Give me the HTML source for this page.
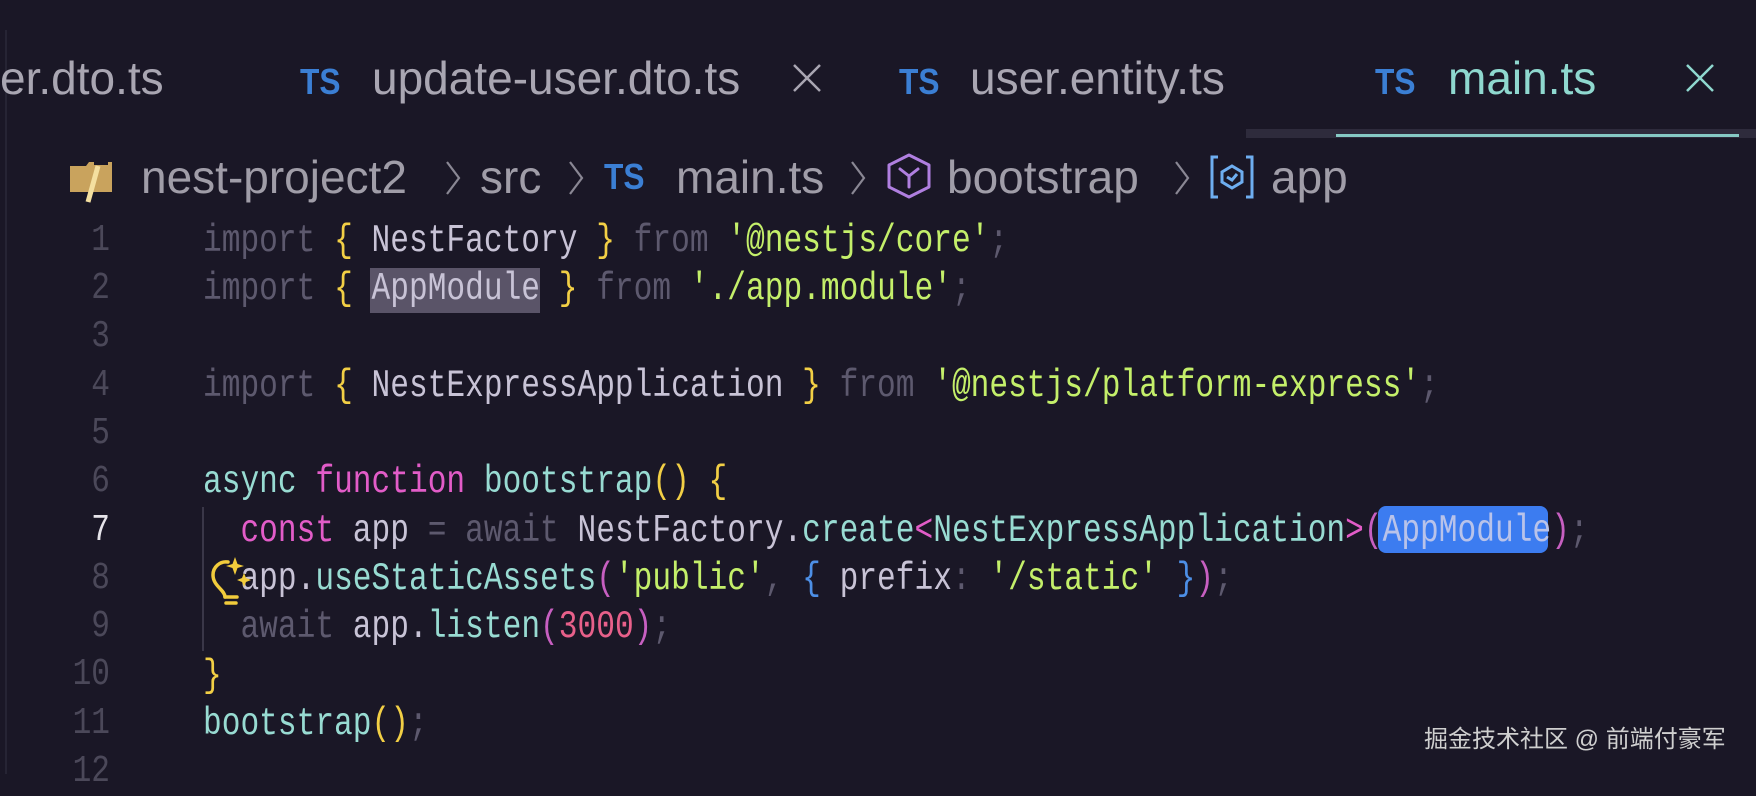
<!DOCTYPE html>
<html><head><meta charset="utf-8">
<style>
html,body{margin:0;padding:0}
body{width:1756px;height:774px;background:#1a1726;position:relative;overflow:hidden;font-family:"Liberation Sans",sans-serif}
.a{position:absolute;white-space:pre}
.tab{font-size:46px;color:#a9a6b2;line-height:60px;top:48px}
.ts{font-weight:bold;color:#3b7fd4;font-size:36px;display:inline-block;transform:scaleX(0.88);transform-origin:left}
.bc{font-size:46px;color:#a09da8;line-height:60px;top:147px}
.ln{font-family:"Liberation Mono",monospace;font-size:38px;color:#4b4859;width:110px;text-align:right;left:0;line-height:48px;transform:scaleX(0.82);transform-origin:right}
.code{position:absolute;left:203px;top:217px;transform:scaleX(0.80);transform-origin:left top;font-family:"Liberation Mono",monospace;font-size:39px;line-height:48.3px;white-space:pre;color:#c8c3d6}
.g{color:#5d596e}.y{color:#f2cf45}.s{color:#c4ef6a}.p{color:#e25cc8}.t{color:#98dbd2}.b{color:#4d8fe6}.r{color:#e8608a}.v{color:#c75fc1}
</style></head><body>
<div class="a" style="left:5px;top:30px;width:2px;height:744px;background:#262434"></div>

<div class="a tab" style="left:0">er.dto.ts</div>
<div class="a tab" style="left:300px"><span class="ts">TS</span></div>
<div class="a tab" style="left:372px">update-user.dto.ts</div>
<svg class="a" style="left:792px;top:63px" width="30" height="30" viewBox="0 0 30 30"><path d="M2 2 L28 28 M28 2 L2 28" stroke="#a9a6b2" stroke-width="2.5"/></svg>
<div class="a tab" style="left:899px"><span class="ts">TS</span></div>
<div class="a tab" style="left:970px">user.entity.ts</div>
<div class="a tab" style="left:1375px"><span class="ts">TS</span></div>
<div class="a tab" style="left:1448px;color:#8fd8cf">main.ts</div>
<svg class="a" style="left:1685px;top:63px" width="30" height="30" viewBox="0 0 30 30"><path d="M2 2 L28 28 M28 2 L2 28" stroke="#8fd8cf" stroke-width="2.5"/></svg>
<div class="a" style="left:1246px;top:129px;width:510px;height:9px;background:#2e2b3c"></div>
<div class="a" style="left:1336px;top:134px;width:403px;height:3px;background:#86c9c4"></div>

<svg class="a" style="left:68px;top:158px" width="46" height="46" viewBox="0 0 46 46">
<path d="M2 8 H18 L21 4 H44 V34 H2 Z" fill="#c9a35d"/>
<rect x="26" y="4" width="14" height="3" fill="#1a1726"/>
<path d="M30 8 L20 44" stroke="#f4dfa0" stroke-width="5"/>
</svg>
<div class="a bc" style="left:141px">nest-project2</div>
<svg class="a" style="left:444px;top:160px" width="18" height="36" viewBox="0 0 18 36"><path d="M3 2 L15 18 L3 34" fill="none" stroke="#8a8794" stroke-width="2.2"/></svg>
<div class="a bc" style="left:480px">src</div>
<svg class="a" style="left:567px;top:160px" width="18" height="36" viewBox="0 0 18 36"><path d="M3 2 L15 18 L3 34" fill="none" stroke="#8a8794" stroke-width="2.2"/></svg>
<div class="a bc" style="left:604px;top:143px"><span class="ts">TS</span></div>
<div class="a bc" style="left:676px">main.ts</div>
<svg class="a" style="left:849px;top:160px" width="18" height="36" viewBox="0 0 18 36"><path d="M3 2 L15 18 L3 34" fill="none" stroke="#8a8794" stroke-width="2.2"/></svg>
<svg class="a" style="left:884px;top:152px" width="50" height="48" viewBox="0 0 50 48">
<path d="M25 3 L45 13 V35 L25 45 L5 35 V13 Z" fill="none" stroke="#b07fe0" stroke-width="3" stroke-linejoin="round"/>
<path d="M16 17 L25 24 L34 17 M25 24 V35" fill="none" stroke="#b07fe0" stroke-width="3" stroke-linecap="round"/>
</svg>
<div class="a bc" style="left:947px">bootstrap</div>
<svg class="a" style="left:1173px;top:160px" width="18" height="36" viewBox="0 0 18 36"><path d="M3 2 L15 18 L3 34" fill="none" stroke="#8a8794" stroke-width="2.2"/></svg>
<svg class="a" style="left:1208px;top:154px" width="48" height="46" viewBox="0 0 48 46">
<path d="M10 3 H4 V43 H10 M38 3 H44 V43 H38" fill="none" stroke="#6eaef0" stroke-width="3"/>
<path d="M24 12 L34 18 V28 L24 34 L14 28 V18 Z" fill="none" stroke="#6eaef0" stroke-width="3"/>
<path d="M19 23 L24 26 L29 20" fill="none" stroke="#6eaef0" stroke-width="3"/>
</svg>
<div class="a bc" style="left:1271px">app</div>

<div class="a ln" style="top:217px">1</div>
<div class="a ln" style="top:265px">2</div>
<div class="a ln" style="top:313px">3</div>
<div class="a ln" style="top:362px">4</div>
<div class="a ln" style="top:410px">5</div>
<div class="a ln" style="top:458px">6</div>
<div class="a ln" style="top:507px;color:#e6e4ea">7</div>
<div class="a ln" style="top:555px">8</div>
<div class="a ln" style="top:603px">9</div>
<div class="a ln" style="top:651px">10</div>
<div class="a ln" style="top:700px">11</div>
<div class="a ln" style="top:748px">12</div>

<div class="a" style="left:202px;top:507px;width:2px;height:144px;background:#3a3748"></div>
<div class="a" style="left:370px;top:268px;width:170px;height:45px;background:#5a5468"></div>
<div class="a" style="left:1378px;top:506px;width:170px;height:47px;background:#3c7cf0;border-radius:8px"></div>

<div class="code"><span class="g">import</span> <span class="y">{</span> NestFactory <span class="y">}</span> <span class="g">from</span> <span class="s">'@nestjs/core'</span><span class="g">;</span>
<span class="g">import</span> <span class="y">{</span> AppModule <span class="y">}</span> <span class="g">from</span> <span class="s">'./app.module'</span><span class="g">;</span>

<span class="g">import</span> <span class="y">{</span> NestExpressApplication <span class="y">}</span> <span class="g">from</span> <span class="s">'@nestjs/platform-express'</span><span class="g">;</span>

<span class="t">async</span> <span class="p">function</span> <span class="t">bootstrap</span><span class="y">()</span> <span class="y">{</span>
  <span class="p">const</span> app <span class="g">=</span> <span class="g">await</span> NestFactory.<span class="t">create</span><span class="p">&lt;</span><span class="t">NestExpressApplication</span><span class="p">&gt;</span><span class="v">(</span><span style="color:#b9c3ea">AppModule</span><span class="v">)</span><span class="g">;</span>
  app.<span class="t">useStaticAssets</span><span class="v">(</span><span class="s">'public'</span><span class="g">,</span> <span class="b">{</span> prefix<span class="g">:</span> <span class="s">'/static'</span> <span class="b">}</span><span class="v">)</span><span class="g">;</span>
  <span class="g">await</span> app.<span class="t">listen</span><span class="v">(</span><span class="r">3000</span><span class="v">)</span><span class="g">;</span>
<span class="y">}</span>
<span class="t">bootstrap</span><span class="y">()</span><span class="g">;</span>
</div>

<svg class="a" style="left:208px;top:555px" width="48" height="56" viewBox="0 0 48 56">
<path d="M17 42 C17 35 5 31 5 20 A13 13 0 0 1 20 7" fill="none" stroke="#f2cc3c" stroke-width="3.5" stroke-linecap="round"/>
<path d="M17 42 H29 M18 48 H28" stroke="#f2cc3c" stroke-width="3.5" stroke-linecap="round"/>
<path d="M27 2 L29.5 9 L36 11 L29.5 13 L27 20 L24.5 13 L18 11 L24.5 9 Z" fill="#f2cc3c"/>
<path d="M36 18 L38 23 L43 25 L38 27 L36 32 L34 27 L29 25 L34 23 Z" fill="#f2cc3c"/>
</svg>

<div class="a" style="left:1424px;top:724px;font-size:24px;color:#cfcfcf;font-family:'Liberation Sans','Noto Sans CJK SC',sans-serif;line-height:32px">掘金技术社区 @ 前端付豪军</div>
</body></html>
